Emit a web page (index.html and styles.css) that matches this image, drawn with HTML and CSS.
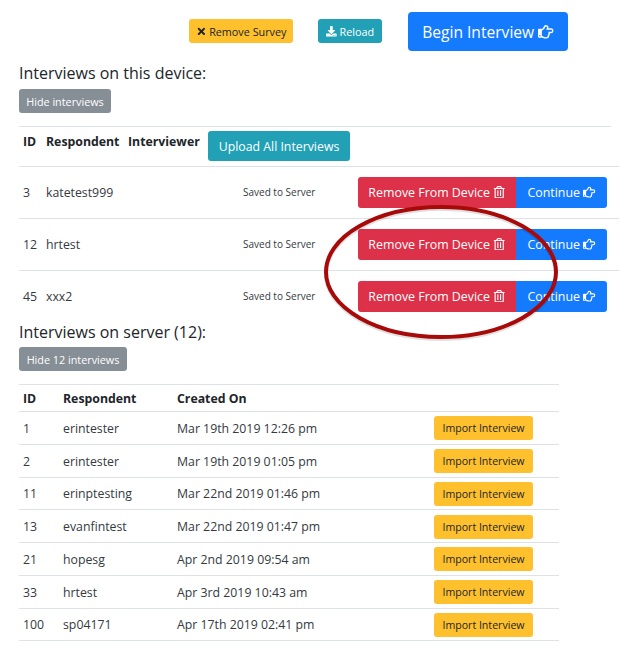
FILE: index.html
```html
<!DOCTYPE html>
<html lang="en">
<head>
<meta charset="utf-8">
<title>Interviews</title>
<link rel="stylesheet" href="styles.css">
</head>
<body>
<svg class="defs" width="0" height="0" aria-hidden="true">
  <symbol id="i-hand" viewBox="0 0 512 512"><path fill="currentColor" d="M428.8 137.6h-86.177a115.52 115.52 0 0 0 2.176-22.4c0-47.914-35.072-83.2-92-83.2-45.314 0-57.002 48.537-75.707 78.784-7.735 12.413-16.994 23.317-25.851 33.253l-.131.146-.129.148C135.662 161.807 127.764 168 120.8 168h-2.679c-5.747-4.952-13.536-8-22.12-8H32c-17.673 0-32 12.894-32 28.8v230.4C0 435.106 14.327 448 32 448h64c8.584 0 16.373-3.048 22.12-8h2.679c28.688 0 67.137 40 127.2 40h21.299c62.542 0 98.8-38.658 99.94-91.145 12.482-17.813 18.491-40.785 15.985-62.791A93.148 93.148 0 0 0 393.152 304H428.8c45.435 0 83.2-37.584 83.2-83.2 0-45.099-38.101-83.2-83.2-83.2zm0 118.4h-91.026c12.837 14.669 14.415 42.825-4.95 61.05 11.227 19.646 1.687 45.624-12.925 53.625 6.524 39.128-10.076 61.325-50.6 61.325H248c-45.491 0-77.21-35.913-120-39.676V215.571c25.239-2.964 42.966-21.222 59.075-39.596 11.275-12.65 21.725-25.3 30.799-39.875C232.355 112.712 244.006 80 252.8 80c23.375 0 44 8.8 44 35.2 0 35.2-26.4 53.075-26.4 70.4h158.4c18.425 0 35.2 16.5 35.2 35.2 0 18.975-16.225 35.2-35.2 35.2zM88 384c0 13.255-10.745 24-24 24s-24-10.745-24-24 10.745-24 24-24 24 10.745 24 24z"/></symbol>
  <symbol id="i-trash" viewBox="0 0 448 512"><path fill="currentColor" d="M268 416h24a12 12 0 0 0 12-12V188a12 12 0 0 0-12-12h-24a12 12 0 0 0-12 12v216a12 12 0 0 0 12 12zM432 80h-82.41l-34-56.7A48 48 0 0 0 274.41 0H173.59a48 48 0 0 0-41.16 23.3L98.41 80H16A16 16 0 0 0 0 96v16a16 16 0 0 0 16 16h16v336a48 48 0 0 0 48 48h288a48 48 0 0 0 48-48V128h16a16 16 0 0 0 16-16V96a16 16 0 0 0-16-16zM171.84 50.91A6 6 0 0 1 177 48h94a6 6 0 0 1 5.15 2.91L293.61 80H154.39zM368 464H80V128h288zm-212-48h24a12 12 0 0 0 12-12V188a12 12 0 0 0-12-12h-24a12 12 0 0 0-12 12v216a12 12 0 0 0 12 12z"/></symbol>
  <symbol id="i-times" viewBox="0 0 352 512"><path fill="currentColor" d="M242.72 256l100.07-100.07c12.28-12.28 12.28-32.19 0-44.48l-22.24-22.24c-12.28-12.28-32.19-12.28-44.48 0L176 189.28 75.93 89.21c-12.28-12.28-32.19-12.28-44.48 0L9.21 111.45c-12.28 12.28-12.28 32.19 0 44.48L109.28 256 9.21 356.07c-12.28 12.28-12.28 32.19 0 44.48l22.24 22.24c12.28 12.28 32.2 12.28 44.48 0L176 322.72l100.07 100.07c12.28 12.28 32.2 12.28 44.48 0l22.24-22.24c12.28-12.28 12.28-32.19 0-44.48L242.72 256z"/></symbol>
  <symbol id="i-download" viewBox="0 0 512 512"><path fill="currentColor" d="M216 0h80c13.3 0 24 10.7 24 24v168h87.7c17.8 0 26.7 21.5 14.1 34.1L269.7 378.3c-7.5 7.5-19.8 7.5-27.3 0L90.1 226.1c-12.6-12.6-3.7-34.1 14.1-34.1H192V24c0-13.3 10.7-24 24-24zm296 376v112c0 13.3-10.7 24-24 24H24c-13.3 0-24-10.7-24-24V376c0-13.3 10.7-24 24-24h146.7l49 49c20.1 20.1 52.5 20.1 72.6 0l49-49H488c13.3 0 24 10.7 24 24zm-124 88c0-11-9-20-20-20s-20 9-20 20 9 20 20 20 20-9 20-20zm64 0c0-11-9-20-20-20s-20 9-20 20 9 20 20 20 20-9 20-20z"/></symbol>
</svg>

<header class="toolbar">
  <button class="btn btn-sm btn-warning remove-survey"><svg class="ico"><use href="#i-times"/></svg> Remove Survey</button>
  <button class="btn btn-sm btn-info reload"><svg class="ico"><use href="#i-download"/></svg> Reload</button>
  <button class="btn btn-lg btn-primary begin">Begin Interview <svg class="ico"><use href="#i-hand"/></svg></button>
</header>

<section class="device">
  <h2 class="title">Interviews on this device:</h2>
  <button class="btn btn-sm btn-secondary hide-device">Hide interviews</button>
  <div class="device-rule"></div>
  <table class="tbl device-tbl">
    <colgroup><col class="d1"><col class="d2"><col class="d3"><col class="d4"><col class="d5"></colgroup>
    <thead>
      <tr><th>ID</th><th>Respondent</th><th>Interviewer</th><th colspan="2"><button class="btn btn-info upload">Upload All Interviews</button></th></tr>
    </thead>
    <tbody>
      <tr><td>3</td><td>katetest999</td><td></td><td class="status">Saved to Server</td><td class="acts"><div class="group"><button class="btn btn-danger rm">Remove From Device <svg class="ico"><use href="#i-trash"/></svg></button><button class="btn btn-primary cont">Continue <svg class="ico"><use href="#i-hand"/></svg></button></div></td></tr>
      <tr><td>12</td><td>hrtest</td><td></td><td class="status">Saved to Server</td><td class="acts"><div class="group"><button class="btn btn-danger rm">Remove From Device <svg class="ico"><use href="#i-trash"/></svg></button><button class="btn btn-primary cont">Continue <svg class="ico"><use href="#i-hand"/></svg></button></div></td></tr>
      <tr class="last"><td>45</td><td>xxx2</td><td></td><td class="status">Saved to Server</td><td class="acts"><div class="group"><button class="btn btn-danger rm">Remove From Device <svg class="ico"><use href="#i-trash"/></svg></button><button class="btn btn-primary cont">Continue <svg class="ico"><use href="#i-hand"/></svg></button></div></td></tr>
    </tbody>
  </table>
</section>

<section class="server">
  <h2 class="title">Interviews on server (12):</h2>
  <button class="btn btn-sm btn-secondary hide-server">Hide 12 interviews</button>
  <table class="tbl server-tbl">
    <colgroup><col class="s1"><col class="s2"><col class="s3"><col class="s4"></colgroup>
    <thead><tr><th>ID</th><th>Respondent</th><th>Created On</th><th></th></tr></thead>
    <tbody>
      <tr><td>1</td><td>erintester</td><td>Mar 19th 2019 12:26 pm</td><td><button class="btn btn-sm btn-warning import">Import Interview</button></td></tr>
      <tr><td>2</td><td>erintester</td><td>Mar 19th 2019 01:05 pm</td><td><button class="btn btn-sm btn-warning import">Import Interview</button></td></tr>
      <tr><td>11</td><td>erinptesting</td><td>Mar 22nd 2019 01:46 pm</td><td><button class="btn btn-sm btn-warning import">Import Interview</button></td></tr>
      <tr><td>13</td><td>evanfintest</td><td>Mar 22nd 2019 01:47 pm</td><td><button class="btn btn-sm btn-warning import">Import Interview</button></td></tr>
      <tr><td>21</td><td>hopesg</td><td>Apr 2nd 2019 09:54 am</td><td><button class="btn btn-sm btn-warning import">Import Interview</button></td></tr>
      <tr><td>33</td><td>hrtest</td><td>Apr 3rd 2019 10:43 am</td><td><button class="btn btn-sm btn-warning import">Import Interview</button></td></tr>
      <tr><td>100</td><td>sp04171</td><td>Apr 17th 2019 02:41 pm</td><td><button class="btn btn-sm btn-warning import">Import Interview</button></td></tr>
    </tbody>
  </table>
</section>

<svg class="circle" width="250" height="150" viewBox="0 0 250 150" aria-hidden="true">
  <ellipse class="circle-shadow" cx="125" cy="72" rx="115" ry="65"/>
  <ellipse class="circle-line" cx="125" cy="70" rx="115" ry="65"/>
</svg>
</body>
</html>
```
FILE: styles.css
```css
* { box-sizing: border-box; }
html, body { margin: 0; padding: 0; }
body {
  position: relative;
  width: 620px;
  height: 647px;
  overflow: hidden;
  background: #fff;
  color: #343a40;
  font-family: "Open Sans", "Noto Sans", sans-serif;
  font-size: 12.3px;
}
.defs { position: absolute; }
.ico { width: 1em; height: 1em; vertical-align: -0.13em; }

.btn {
  display: inline-block;
  border: 0;
  border-radius: 3px;
  font-family: inherit;
  white-space: nowrap;
  text-align: center;
  padding: 0;
}
.btn-sm { height: 24px; font-size: 10.8px; }
.btn-warning { background: #ffc02d; color: #212529; }
.btn-info { background: #22a1b6; color: #fff; }
.btn-primary { background: #147bff; color: #fff; }
.btn-danger { background: #dc3148; color: #fff; }
.btn-secondary { background: #868e96; color: #fff; }

.toolbar {
  height: 63px;
  padding: 12px 0 0 189px;
  display: flex;
  align-items: flex-start;
}
.remove-survey { width: 104px; margin: 7px 25px 0 0; }
.reload { width: 64px; margin: 7px 26px 0 0; }
.begin { width: 160px; height: 39px; font-size: 15.6px; border-radius: 4px; }

.title { margin: 0; font-size: 16px; font-weight: 500; line-height: 20px; color: #212529; }

.device { padding-left: 19px; }
.device .title { margin-bottom: 6px; }
.hide-device { width: 92px; display: block; }
.device-rule { width: 592px; height: 1px; margin-top: 13px; background: #dee2e6; }

.tbl { border-collapse: collapse; table-layout: fixed; }
.tbl th, .tbl td { padding: 0 0 0 4px; text-align: left; vertical-align: middle; }
.tbl th { font-weight: 700; color: #212529; }

.device-tbl { width: 600px; }
.d1 { width: 23px; } .d2 { width: 82px; } .d3 { width: 84px; } .d4 { width: 150px; } .d5 { width: 261px; }
.device-tbl thead tr { height: 39px; border-bottom: 1px solid #dee2e6; }
.device-tbl thead th { vertical-align: top; padding-top: 6px; }
.device-tbl thead th:last-child { padding: 4px 0 0 0; }
.upload { width: 142px; height: 30px; font-size: 12.3px; }
.device-tbl tbody tr { height: 52px; border-bottom: 1px solid #dee2e6; }
.device-tbl tbody tr.last { border-bottom: 0; }
.status { font-size: 10px; padding-left: 35px !important; }
.acts { padding: 0 !important; }
.group { display: flex; }
.rm { width: 158px; height: 31px; border-radius: 3px 0 0 3px; font-size: 12.4px; }
.cont { width: 91px; height: 31px; border-radius: 0 3px 3px 0; font-size: 12.4px; }

.server { padding-left: 19px; }
.server .title { margin-bottom: 5px; }
.hide-server { width: 108px; display: block; }
.server-tbl { width: 540px; margin-top: 13px; border-top: 1px solid #dee2e6; }
.s1 { width: 44px; } .s2 { width: 114px; } .s3 { width: 257px; } .s4 { width: 125px; }
.server-tbl thead tr { height: 27px; border-bottom: 1px solid #dee2e6; }
.server-tbl tbody tr { height: 32.75px; border-bottom: 1px solid #dee2e6; }
.server-tbl tbody td { padding-top: 1px; }
.server-tbl th:nth-child(n+2), .server-tbl td:nth-child(n+2) { padding-left: 0; }
.import { width: 99px; display: block; font-size: 10.6px; }

.circle { position: absolute; left: 316px; top: 202px; }
.circle-line { fill: none; stroke: #a80a0a; stroke-width: 4; }
.circle-shadow { fill: none; stroke: rgba(0,0,0,.12); stroke-width: 4; }
```
